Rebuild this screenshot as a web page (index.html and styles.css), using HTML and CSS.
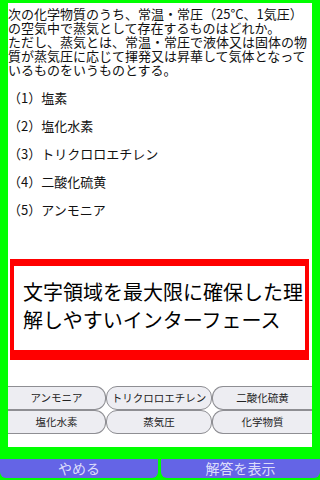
FILE: index.html
```html
<html>
	<head>
		<title>化学物質 問題</title>
		<meta charset="UTF-8">
		<meta name="viewport" content="width=device-width, initial-scale=1">
		<link rel="stylesheet" href="styles.css">
	</head>
	<body>
		<div id="panel">
			<div class="question">
				次の化学物質のうち、常温・常圧（25°C、1気圧）<br>
				の空気中で蒸気として存在するものはどれか。<br>
				ただし、蒸気とは、常温・常圧で液体又は固体の物<br>
				質が蒸気圧に応じて揮発又は昇華して気体となって<br>
				いるものをいうものとする。<br>
				<br>
				（1）塩素<br>
				<br>
				（2）塩化水素<br>
				<br>
				（3）トリクロロエチレン<br>
				<br>
				（4）二酸化硫黄<br>
				<br>
				（5）アンモニア
			</div>
			<div class="notice">文字領域を最大限に確保した理解しやすいインターフェース</div>
			<div class="choices">
				<div class="choice first">アンモニア</div>
				<div class="choice">トリクロロエチレン</div>
				<div class="choice last">二酸化硫黄</div>
				<div class="choice first">塩化水素</div>
				<div class="choice">蒸気圧</div>
				<div class="choice last">化学物質</div>
			</div>
		</div>
		<div id="footer">
			<div class="footButton quit">やめる</div>
			<div class="footButton answer">解答を表示</div>
		</div>
	</body>
</html>
```

FILE: styles.css
```css
body {
	margin: 0;
	width: 320px;
	height: 480px;
	overflow: hidden;
	background-color: #00ff00;
	font-family: "Noto Sans CJK JP", "Noto Sans", sans-serif;
	color: #111;
}
#panel {
	margin: 3px 8px 0 8px;
	height: 444px;
	background: #fff;
	display: flex;
	flex-direction: column;
}
.question {
	padding-top: 4px;
	font-size: 13px;
	line-height: 14px;
	white-space: nowrap;
}
.notice {
	margin: 42px 3px 0 2px;
	height: 84px;
	padding: 12px 0 0 9px;
	box-sizing: content-box;
	border-style: solid;
	border-color: #ff0000;
	border-width: 7px 4px 10px 4px;
	font-size: 20px;
	line-height: 28px;
	color: #000;
	box-sizing: border-box;
	height: 101px;
}
.choices {
	margin-top: 26px;
	display: grid;
	grid-template-columns: 98px 106px 100px;
	grid-auto-rows: 24px;
}
.choice {
	background: #ededf2;
	border: 1px solid #8e8e93;
	border-radius: 11px;
	font-size: 10.5px;
	line-height: 22px;
	text-align: center;
	color: #222;
}
.choice.first {
	border-left: none;
	border-radius: 0 11px 11px 0;
}
.choice.last {
	border-right: none;
	border-radius: 11px 0 0 11px;
}
#footer {
	margin-top: 12px;
	display: flex;
	gap: 3px;
}
.footButton {
	height: 19px;
	background: #6464e6;
	border-radius: 0 0 6px 6px;
	color: #dcdcfa;
	font-size: 14px;
	line-height: 19px;
	text-align: center;
}
.quit {
	width: 158px;
}
.answer {
	width: 159px;
}
```
